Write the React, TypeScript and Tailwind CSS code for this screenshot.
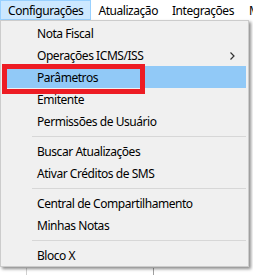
import React from 'react'

type Entry = { label: string; sub?: boolean; active?: boolean } | 'sep'

const entries: Entry[] = [
  { label: 'Nota Fiscal' },
  { label: 'Operações ICMS/ISS', sub: true },
  { label: 'Parâmetros', active: true },
  { label: 'Emitente' },
  { label: 'Permissões de Usuário' },
  'sep',
  { label: 'Buscar Atualizações' },
  { label: 'Ativar Créditos de SMS' },
  'sep',
  { label: 'Central de Compartilhamento' },
  { label: 'Minhas Notas' },
  'sep',
  { label: 'Bloco X' },
]

const MenuItem = ({ label, sub, active }: { label: string; sub?: boolean; active?: boolean }) => {
  return (
    <div className={`relative flex h-[22px] items-center pt-[2px] pl-[34px] mx-[2px] ${active ? 'bg-[#91c9f7]' : ''}`}>
      <span>{label}</span>
      {sub && (
        <svg className="absolute right-[11px] top-[8px]" width="5" height="8" viewBox="0 0 5 8">
          <polyline points="0.5,0.5 4,4 0.5,7.5" fill="none" stroke="#333" strokeWidth="1.2" />
        </svg>
      )}
    </div>
  )
}

export default function App() {
  return (
    <div className="relative w-[253px] h-[275px] overflow-hidden bg-white text-[12px] tracking-[-0.45px] text-black font-['Noto_Sans',sans-serif]">
      {/* menu bar */}
      <div className="flex h-[20px] items-center bg-white">
        <div className="flex h-[20px] items-center pt-px pl-[7px] pr-[7px] bg-[#cce8ff] border border-[#99d1ff]">Configurações</div>
        <div className="pt-px pl-[7px] pr-[7px]">Atualização</div>
        <div className="pt-px pl-[7px] pr-[7px]">Integrações</div>
        <div className="pt-px pl-[8px]">M</div>
      </div>

      {/* content behind the menu */}
      <div className="absolute left-[26px] top-[268px] h-[10px] w-px bg-[#d0d0d0]" />
      <div className="absolute left-[153px] top-[268px] h-[10px] w-px bg-[#a0a0a0]" />

      {/* dropdown */}
      <div className="absolute left-0 top-[20px] w-[249px] border border-[#cccccc] bg-[#f0f0f0] pt-[1px] shadow-[2px_2px_3px_rgba(0,0,0,0.45)]">
        {entries.map((e, i) =>
          e === 'sep' ? (
            <div key={i} className="flex h-[8px] items-center pl-[31px] pr-[2px]">
              <div className="h-px w-full bg-[#d7d7d7]" />
            </div>
          ) : (
            <MenuItem key={i} {...e} />
          )
        )}
      </div>

      {/* annotation */}
      <div className="absolute left-[2px] top-[64px] w-[143px] h-[30px] border-[5px] border-[#ed1c24]" />
    </div>
  )
}
